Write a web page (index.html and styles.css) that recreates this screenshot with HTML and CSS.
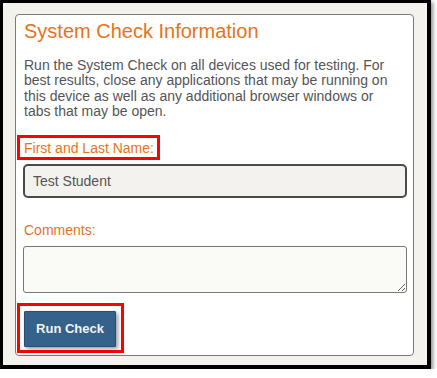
FILE: index.html
```html
<!DOCTYPE html>
<html>
<head>
<meta charset="utf-8">
<link rel="stylesheet" href="styles.css">
</head>
<body>
<div class="frame">
  <div class="card">
    <h1 class="title">System Check Information</h1>
    <p class="intro">Run the System Check on all devices used for testing. For best results, close any applications that may be running on this device as well as any additional browser windows or tabs that may be open.</p>
    <div class="highlight label-box"><label class="label" for="name">First and Last Name:</label></div>
    <input id="name" class="name-input" type="text" value="Test Student">
    <label class="label comments-label" for="comments">Comments:</label>
    <textarea id="comments" class="comments"></textarea>
    <div class="highlight button-box"><button class="run-btn" type="button">Run Check</button></div>
  </div>
</div>
</body>
</html>
```
FILE: styles.css
```css
* { box-sizing: border-box; }
html, body { margin: 0; padding: 0; background: #ffffff; }
body { font-family: "Liberation Sans", Arial, sans-serif; }

.frame {
  width: 431px;
  height: 369px;
  border-style: solid;
  border-color: #000;
  border-width: 3px 4px 4px 3px;
  background: #f3f2ee;
  padding: 11px 13px 0 12px;
  box-shadow: 2px 2px 4px rgba(0, 0, 0, 0.45);
}

.card {
  display: flex;
  flex-direction: column;
  align-items: flex-start;
  height: 342px;
  background: #ffffff;
  border: 1px solid #7a7a7a;
  border-radius: 4px;
  padding: 0 6px 0 7px;
}

.title {
  margin: 5px 0 0 1px;
  font-size: 20px;
  font-weight: normal;
  line-height: 23px;
  color: #e8731c;
}

.intro {
  margin: 15px 0 0 1px;
  padding-right: 16px;
  font-size: 14px;
  line-height: 15.4px;
  color: #555555;
}

.highlight {
  border: 3px solid #ff0000;
}

.label-box {
  margin: 15px 0 0 -6px;
  padding: 2px 3px 1px 4px;
}

.label {
  display: block;
  font-size: 14px;
  line-height: 16px;
  color: #e8731c;
}

.name-input {
  margin-top: 4px;
  width: 100%;
  height: 34px;
  border: 2px solid #4a4a4a;
  border-radius: 5px;
  background: #f3f2ee;
  padding: 0 0 0 8px;
  font-family: "Liberation Sans", Arial, sans-serif;
  font-size: 14px;
  color: #555555;
  outline: none;
}

.comments-label {
  margin: 24px 0 0 1px;
}

.comments {
  margin-top: 8px;
  width: 100%;
  height: 47px;
  border: 1px solid #777777;
  border-radius: 3px;
  background: #fafaf6;
  font-family: "Liberation Sans", Arial, sans-serif;
  font-size: 14px;
  resize: both;
}

.button-box {
  margin: 10px 0 0 -6px;
  padding: 5px 5px 3px 4px;
}

.run-btn {
  display: block;
  width: 92px;
  height: 36px;
  background: #35628a;
  border: 1px solid #2a4e6e;
  border-radius: 1px;
  color: #f2f2f2;
  font-family: "Liberation Sans", Arial, sans-serif;
  font-size: 13px;
  font-weight: bold;
  padding: 0;
  box-shadow: 2px 2px 4px rgba(0, 0, 0, 0.4);
}
```
